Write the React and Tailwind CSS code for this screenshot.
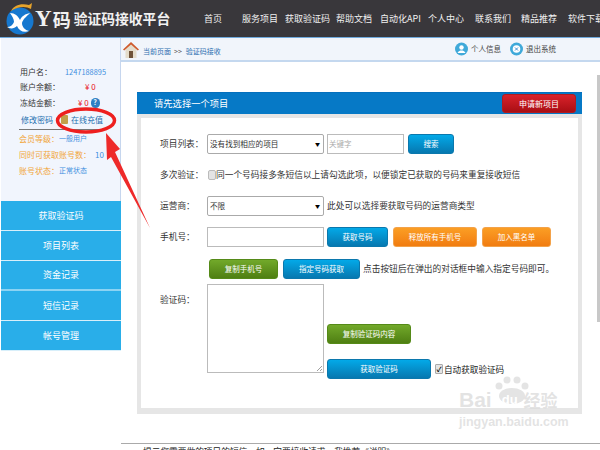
const cjk = "font-['Noto_Sans_CJK_SC','Noto_Sans',sans-serif]";

const Btn = ({ color = "blue", className = "", children }) => {
  const colors = {
    blue: "bg-gradient-to-b from-[#03a9e8] to-[#0678b0] border-[#0b78ad]",
    green: "bg-gradient-to-b from-[#72a92a] to-[#4f7f12] border-[#558a18]",
    orange: "bg-gradient-to-b from-[#fb9e24] to-[#f17c10] border-[#f3a24a]",
    red: "bg-gradient-to-b from-[#d9222a] to-[#a90e14] border-[#b01c20]",
  };
  return (
    <button className={`flex items-center justify-center rounded-[3px] border text-[7.5px] leading-none whitespace-nowrap text-white ${colors[color]} ${className}`}>
      {children}
    </button>
  );
};

const Logo = () => (
  <svg width="30" height="34" viewBox="0 0 30 34" className="shrink-0">
    <circle cx="15" cy="19" r="13.500" fill="#1678cf" />
    <path d="M5 11c5 0 8 3 10 7 2-4 5-6 10-7-3 3-7 6-8 10 0 4 3 7 7 8-5 2-10 0-12-5-3 3-7 3-10 1 3 0 6-2 7-5C9 17 7 14 5 11z" fill="#fff" />
    <path d="M6 9C9 3 16 1 24 3l3-2-1 6c-5-3-13-3-20 2z" fill="#e6a32b" />
  </svg>
);

const UserInfo = () => (
  <div className="flex h-[163px] flex-col border-r border-[#c6d6ee] bg-[#f1f5fd] pl-[19px] text-[8px] whitespace-nowrap text-[#333]">
    <div className="mt-[26px] flex h-[15px] items-center">
      <span className="w-[45px]">用户名：</span>
      <span className="text-[7.4px] text-[#3f8fe0]">1247188895</span>
    </div>
    <div className="flex h-[16px] items-center">
      <span className="w-[45px]">账户余额：</span>
      <span className="ml-[20px] text-[#e8101a]">¥ 0</span>
    </div>
    <div className="flex h-[15px] items-center">
      <span className="w-[45px]">冻结金额：</span>
      <span className="ml-[13px] text-[#e8101a]">¥ 0</span>
      <span className="ml-[2px] flex h-[10px] w-[9px] items-center justify-center rounded-full bg-[#2f7fc4] text-[7px] font-bold text-white">?</span>
    </div>
    <div className="mr-[17px] -ml-[1px] flex h-[20px] items-center border-b border-[#777] pl-[2px] text-[#1c6fb0]">
      <span>修改密码</span>
      <span className="ml-[8px] h-[9px] w-[8px] rounded-[1px] bg-[#c2a04a]" />
      <span className="ml-[3px]">在线充值</span>
    </div>
    <div className="flex h-[17px] items-center -ml-[1px] text-[#f2a63a]">
      会员等级：<span className="text-[7px] text-[#3f8fe0]">一般用户</span>
    </div>
    <div className="flex h-[15px] items-center -ml-[1px] text-[#f2a63a]">
      同时可获取账号数：<span className="ml-[4px] text-[#3f8fe0]">10</span>
    </div>
    <div className="flex h-[17px] items-center -ml-[1px] text-[#f2a63a]">
      账号状态：<span className="text-[7px] text-[#3f8fe0]">正常状态</span>
    </div>
  </div>
);

const SideMenu = () => (
  <div className="flex flex-col text-[9px] text-white">
    {["获取验证码", "项目列表", "资金记录", "短信记录", "帐号管理"].map((item, idx) => (
      <div
        key={item}
        className={`flex h-[30px] items-center justify-center bg-[#29aee9] ${idx === 2 ? "border-b-2 border-[#8bd3f3]" : "border-b border-[#d8effa]"}`}
      >
        {item}
      </div>
    ))}
  </div>
);

const Label = ({ children }) => <span className="w-[47px] shrink-0 text-[8.7px]">{children}</span>;

const Select = ({ children }) => (
  <div className="flex h-[20px] w-[117px] shrink-0 items-center justify-between rounded-[2px] border border-[#aaa] bg-white pl-[2px] pr-[3px] text-[7.6px]">
    <span>{children}</span>
    <span className="text-[5px] text-black">▼</span>
  </div>
);

const Form = () => (
  <div className="mx-[16px] mt-[30px] w-[445px] bg-white">
    <div className="flex h-[22px] items-center justify-between border-t border-[#0570bd] bg-[#0679c6] pl-[17px] pr-[6px] text-[9.3px] text-white">
      <span>请先选择一个项目</span>
      <Btn color="red" className="h-[19px] w-[74px] text-[8px] text-[#ffdcdc]">申请新项目</Btn>
    </div>
    <div className="h-[300px] border-x-[4px] border-t-[4px] border-b-[6px] border-[#e6e6e6] bg-white pl-[19px] text-[8.7px] whitespace-nowrap text-[#333]">
      <div className="mt-[16px] flex h-[20px] items-center">
        <Label>项目列表：</Label>
        <Select>没有找到相应的项目</Select>
        <div className="ml-[3px] flex h-[20px] w-[77px] items-center border border-[#bbb] pl-[1px] text-[7.5px] text-[#aaa]">关键字</div>
        <Btn className="ml-[4px] h-[20px] w-[46px]">搜索</Btn>
      </div>
      <div className="mt-[11px] flex h-[20px] items-center">
        <Label>多次验证：</Label>
        <span className="ml-[1px] h-[10px] w-[8px] rounded-[2px] border border-[#bbb] bg-[#e4e4e4]" />
        <span>同一个号码接多条短信以上请勾选此项，以便锁定已获取的号码来重复接收短信</span>
      </div>
      <div className="mt-[11px] flex h-[20px] items-center">
        <Label>运营商：</Label>
        <Select>不限</Select>
        <span className="ml-[3px]">此处可以选择要获取号码的运营商类型</span>
      </div>
      <div className="mt-[11px] flex h-[20px] items-center">
        <Label>手机号：</Label>
        <div className="h-[20px] w-[117px] border border-[#bbb]" />
        <Btn className="ml-[3px] h-[20px] w-[61px]">获取号码</Btn>
        <Btn color="orange" className="ml-[5px] h-[20px] w-[84px]">释放所有手机号</Btn>
        <Btn color="orange" className="ml-[5px] h-[20px] w-[69px]">加入黑名单</Btn>
      </div>
      <div className="mt-[12px] ml-[49px] flex h-[20px] items-center">
        <Btn color="green" className="h-[20px] w-[69px]">复制手机号</Btn>
        <Btn className="ml-[5px] h-[20px] w-[77px]">指定号码获取</Btn>
        <span className="ml-[3px]">点击按钮后在弹出的对话框中输入指定号码即可。</span>
      </div>
      <div className="mt-[5px] flex">
        <Label><span className="mt-[9px] block">验证码：</span></Label>
        <div className="relative h-[89px] w-[117px] border border-[#bbb]">
          <svg width="7" height="7" viewBox="0 0 7 7" className="absolute right-0 bottom-0">
            <path d="M1 6 6 1M4 6l2-2" stroke="#888" strokeWidth="0.8" />
          </svg>
        </div>
        <div className="ml-[3px] flex flex-col">
          <Btn color="green" className="mt-[40px] h-[20px] w-[84px]">复制验证码内容</Btn>
          <div className="mt-[15px] flex items-center">
            <Btn className="h-[20px] w-[104px]">获取验证码</Btn>
            <span className="ml-[4px] flex h-[10px] w-[8px] items-center justify-center rounded-[1px] border border-[#aaa] bg-[#e4e4e4] text-[7px] font-bold leading-none text-black">✓</span>
            <span className="ml-[1px] text-[8.6px] text-[#222]">自动获取验证码</span>
          </div>
        </div>
      </div>
    </div>
  </div>
);

export default function App() {
  return (
    <div className={`relative h-[450px] w-[600px] overflow-hidden bg-white ${cjk}`}>
      <header className="flex h-[38px] items-center border-b border-[#6fa9dc] bg-[#39373b] pl-[5px] text-[9px] whitespace-nowrap text-[#f1f1f1]">
        <div className="flex w-[199px] shrink-0 items-center">
          <Logo />
          <span className="font-['Liberation_Serif',serif] text-[23px] leading-none font-bold">Y</span>
          <span className="ml-[1px] text-[18px] leading-none font-bold">码</span>
          <span className="ml-[3px] text-[13.8px] leading-none font-bold">验证码接收平台</span>
        </div>
        <nav className="flex items-center">
          <span className="w-[38px]">首页</span>
          <span className="w-[43px]">服务项目</span>
          <span className="w-[51px]">获取验证码</span>
          <span className="w-[44px]">帮助文档</span>
          <span className="w-[48px]">自动化API</span>
          <span className="w-[47px]">个人中心</span>
          <span className="w-[46px]">联系我们</span>
          <span className="w-[47px]">精品推荐</span>
          <span>软件下载</span>
        </nav>
      </header>

      <div className="flex">
        <aside className="ml-[1px] w-[120px] shrink-0">
          <UserInfo />
          <SideMenu />
        </aside>

        <main className="min-w-0 flex-1">
          <div className="flex h-[24px] items-center border-b-2 border-[#c4d8ef] bg-[#f1f5fb] text-[7px] whitespace-nowrap text-[#2f6fb0]">
            <svg width="16" height="17" viewBox="0 0 16 17" className="ml-[2px] shrink-0">
              <path d="M2.500 8 8 3l5.500 5v9h-11z" fill="#e4dccb" />
              <path d="M0 8.500 8 1l8 7.500-1.200 1L8 3.500 1.200 9.500z" fill="#cf5a2c" />
              <rect x="6" y="10" width="4" height="7" fill="#6f5238" />
            </svg>
            <span className="ml-[4px] mt-[4px]">当前页面</span>
            <span className="ml-[3px] mt-[4px] text-[#555]">&gt;&gt;</span>
            <span className="ml-[4px] mt-[4px]">验证码接收</span>
            <svg width="13" height="14" viewBox="0 0 13 14" className="ml-auto shrink-0">
              <circle cx="6.500" cy="7" r="6.500" fill="#3fa9d9" />
              <circle cx="6.500" cy="5.500" r="2.200" fill="#fff" />
              <path d="M2.500 11c1-2 2.500-2.500 4-2.500s3 .5 4 2.500z" fill="#fff" />
            </svg>
            <span className="ml-[3px] text-[7.5px] text-[#444]">个人信息</span>
            <svg width="13" height="14" viewBox="0 0 13 14" className="ml-[9px] shrink-0">
              <circle cx="6.500" cy="7" r="6.500" fill="#3fa9d9" />
              <circle cx="6.500" cy="7" r="3.800" fill="#fff" />
              <path d="M5 5.500l3 3M8 5.500l-3 3" stroke="#3f8fd0" strokeWidth="1" />
            </svg>
            <span className="mr-[44px] ml-[3px] text-[7.5px] text-[#444]">退出系统</span>
          </div>
          <Form />
          <div className="mt-[29px] border-t border-[#aaa] pl-[22px] pt-[3px] text-[8.7px] leading-[10px] whitespace-nowrap text-[#222]">
            提示您需要做的项目的短信，如一定要接收请求，我推荐《说明》
          </div>
        </main>
      </div>

      {/* scrollbar thumb */}
      <div className="absolute top-[75px] right-0 h-[247px] w-[3px] bg-[#c8c8c8]" />

      {/* red annotation */}
      <svg width="600" height="450" viewBox="0 0 600 450" className="pointer-events-none absolute inset-0">
        <ellipse cx="86" cy="120.500" rx="28.500" ry="11.500" fill="none" stroke="#ee1f1f" strokeWidth="3.500" />
        <path d="M106 133 120 149 115 152 150 228 111 157 107 160z" fill="#ee2a2a" />
      </svg>

      {/* watermark */}
      <div className="pointer-events-none absolute top-[387px] left-[459px] w-[110px] leading-none text-[#dcdcdc]/80">
        <svg width="40" height="30" viewBox="0 0 40 30" className="absolute top-[-12px] left-[33px]">
          <ellipse cx="20" cy="21" rx="13" ry="8" fill="#e4e4e4" />
          <circle cx="7" cy="11" r="3.500" fill="#e4e4e4" />
          <circle cx="15" cy="5" r="3.500" fill="#e4e4e4" />
          <circle cx="25" cy="5" r="3.500" fill="#e4e4e4" />
          <circle cx="33" cy="11" r="3.500" fill="#e4e4e4" />
        </svg>
        <div className="relative flex h-[24px] items-center font-['Liberation_Sans',sans-serif] text-[21px] font-bold">
          Bai
          <span className="ml-[10px] text-[13px] text-white">du</span>
          <span className={`ml-[6px] text-[17px] font-bold ${cjk}`}>经验</span>
        </div>
        <div className="relative mt-[5px] font-['Liberation_Sans',sans-serif] text-[12.5px] font-bold whitespace-nowrap">jingyan.baidu.com</div>
      </div>
    </div>
  );
}
